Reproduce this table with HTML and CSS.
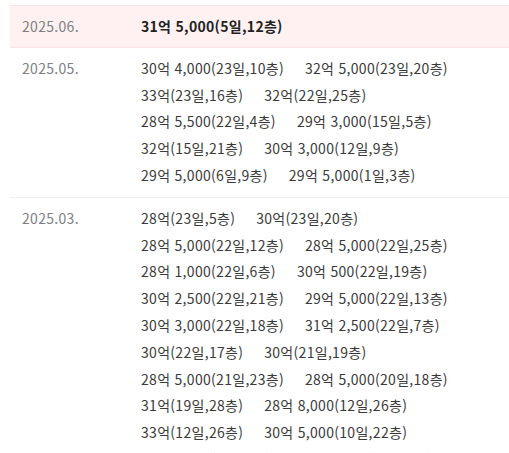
FILE: index.html
```html
<!DOCTYPE html>
<html lang="ko">
<head>
    <meta charset="UTF-8">
    <meta name="viewport" content="width=device-width, initial-scale=1.0">
    <title>실거래가</title>
    <link rel="stylesheet" href="styles.css">
</head>
<body>
    <table class="deal-table">
        <tbody>
            <tr class="deal-row current">
                <td class="deal-month">2025.06.</td>
                <td class="deal-cell">
                    <div class="deal-list">
                        <span class="deal">31억 5,000(5일,12층)</span>
                    </div>
                </td>
            </tr>
            <tr class="deal-row">
                <td class="deal-month">2025.05.</td>
                <td class="deal-cell">
                    <div class="deal-list">
                        <span class="deal">30억 4,000(23일,10층)</span>
                        <span class="deal">32억 5,000(23일,20층)</span>
                        <span class="deal">33억(23일,16층)</span>
                        <span class="deal">32억(22일,25층)</span>
                        <span class="deal">28억 5,500(22일,4층)</span>
                        <span class="deal">29억 3,000(15일,5층)</span>
                        <span class="deal">32억(15일,21층)</span>
                        <span class="deal">30억 3,000(12일,9층)</span>
                        <span class="deal">29억 5,000(6일,9층)</span>
                        <span class="deal">29억 5,000(1일,3층)</span>
                    </div>
                </td>
            </tr>
            <tr class="deal-row">
                <td class="deal-month">2025.03.</td>
                <td class="deal-cell">
                    <div class="deal-list">
                        <span class="deal">28억(23일,5층)</span>
                        <span class="deal">30억(23일,20층)</span>
                        <span class="deal">28억 5,000(22일,12층)</span>
                        <span class="deal">28억 5,000(22일,25층)</span>
                        <span class="deal">28억 1,000(22일,6층)</span>
                        <span class="deal">30억 500(22일,19층)</span>
                        <span class="deal">30억 2,500(22일,21층)</span>
                        <span class="deal">29억 5,000(22일,13층)</span>
                        <span class="deal">30억 3,000(22일,18층)</span>
                        <span class="deal">31억 2,500(22일,7층)</span>
                        <span class="deal">30억(22일,17층)</span>
                        <span class="deal">30억(21일,19층)</span>
                        <span class="deal">28억 5,000(21일,23층)</span>
                        <span class="deal">28억 5,000(20일,18층)</span>
                        <span class="deal">31억(19일,28층)</span>
                        <span class="deal">28억 8,000(12일,26층)</span>
                        <span class="deal">33억(12일,26층)</span>
                        <span class="deal">30억 5,000(10일,22층)</span>
                        <span class="deal">29억 3,000(9일,11층)</span>
                        <span class="deal">29억 5,000(8일,16층)</span>
                    </div>
                </td>
            </tr>
        </tbody>
    </table>
</body>
</html>
```

FILE: styles.css
```css
body {
    margin: 0;
    padding: 5px 0 0 10px;
    background-color: #fff;
    font-family: "Noto Sans CJK KR", "Noto Sans", sans-serif;
    font-size: 14px;
    letter-spacing: 0.3px;
    color: #3a3a3a;
}
.deal-table {
    width: 100%;
    border-collapse: collapse;
}
.deal-row td {
    vertical-align: top;
    border-bottom: 1px solid #f1f1f1;
    padding-top: 7px;
    padding-bottom: 8px;
    line-height: 26.8px;
}
.deal-row.current td {
    background-color: #fff1f1;
    border-top: 1px solid #fde3e3;
    border-bottom: 1px solid #fde3e3;
    padding-top: 7px;
    padding-bottom: 7px;
}
.deal-row.current .deal {
    font-weight: bold;
    color: #222;
}
.deal-month {
    width: 117px;
    padding-left: 12px;
    color: #808080;
    white-space: nowrap;
}
.deal-list {
    display: flex;
    flex-wrap: wrap;
    column-gap: 21px;
    max-width: 340px;
}
.deal {
    white-space: nowrap;
}
```
